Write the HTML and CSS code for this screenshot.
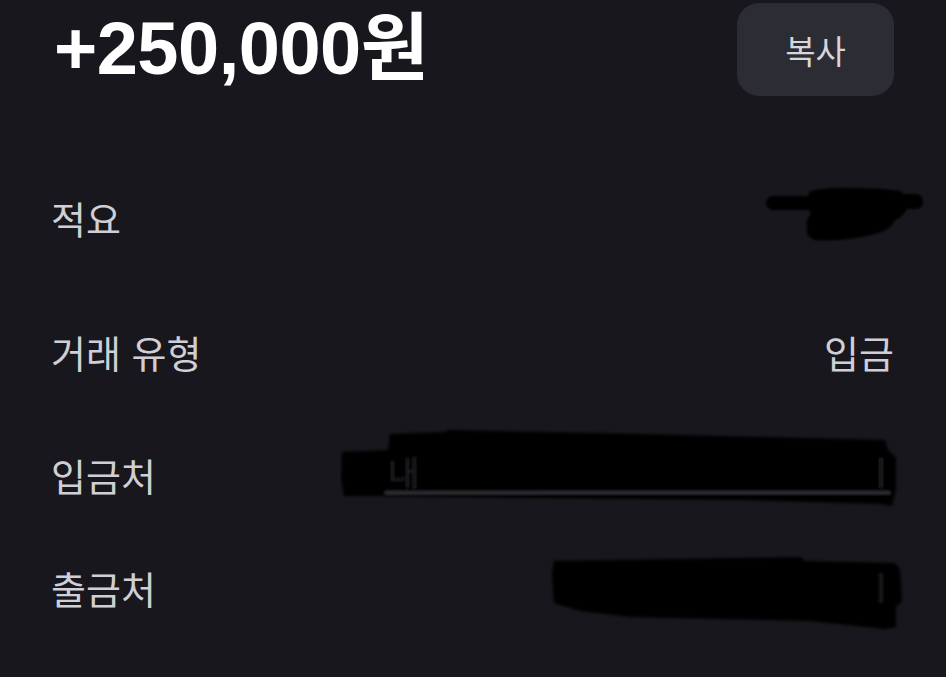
FILE: index.html
```html
<!DOCTYPE html>
<html lang="ko">
<head>
<meta charset="utf-8">
<title>거래 상세</title>
<link rel="stylesheet" href="styles.css">
</head>
<body>
<main class="screen">
  <header class="header">
    <h1 class="amount">+250,000원</h1>
    <button class="copy-btn" type="button">복사</button>
  </header>

  <section class="rows">
    <div class="row row-memo">
      <span class="label">적요</span>
      <svg class="redact redact-memo" width="163" height="58" viewBox="0 0 163 58" aria-hidden="true">
        <defs><filter id="soft1"><feGaussianBlur stdDeviation="1.2"/></filter></defs>
        <g fill="#040406" filter="url(#soft1)">
          <rect x="3" y="10" width="80" height="14" rx="7"/>
          <path d="M46 6 Q60 1 90 2 Q120 2 138 5 L145 20 Q142 30 132 34 Q128 44 112 48 Q80 56 52 54 Q42 50 44 42 Q42 34 48 28 Q42 18 46 6 Z"/>
          <rect x="128" y="8" width="32" height="15" rx="7"/>
        </g>
      </svg>
    </div>

    <div class="row row-type">
      <span class="label">거래 유형</span>
      <span class="value">입금</span>
    </div>

    <div class="row row-in">
      <span class="label">입금처</span>
      <svg class="redact redact-in" width="562" height="82" viewBox="0 0 562 82" aria-hidden="true">
        <defs><filter id="soft2"><feGaussianBlur stdDeviation="1.5"/></filter></defs>
        <g filter="url(#soft2)">
          <path fill="#040406" d="M2 24 L48 22 L50 6 L105 4 L108 2 L300 6 L545 12 L548 22 L556 30 L556 62 L552 78 L540 76 L400 72 L200 70 L48 68 L4 68 L1 50 Z"/>
          <rect x="45" y="64" width="505" height="1.5" fill="#4a4a50"/>
          <text x="48" y="58" fill="#1c1c22" font-size="34" font-family="Noto Sans CJK KR, sans-serif">내</text>
          <rect x="540" y="30" width="2" height="30" fill="#26262c"/>
        </g>
      </svg>
    </div>

    <div class="row row-out">
      <span class="label">출금처</span>
      <svg class="redact redact-out" width="356" height="78" viewBox="0 0 356 78" aria-hidden="true">
        <defs><filter id="soft3"><feGaussianBlur stdDeviation="1.5"/></filter></defs>
        <g filter="url(#soft3)">
          <path fill="#040406" d="M4 6 L250 2 L255 6 L345 8 L350 14 L352 46 L346 52 L346 72 L335 74 L260 66 L80 62 L30 56 L4 48 L2 20 Z"/>
          <rect x="330" y="18" width="2" height="30" fill="#222228"/>
        </g>
      </svg>
    </div>
  </section>
</main>
</body>
</html>
```

FILE: styles.css
```css
* {
  box-sizing: border-box;
}

html,
body {
  margin: 0;
  padding: 0;
  background: #17171d;
}

body {
  width: 946px;
  height: 677px;
  overflow: hidden;
  font-family: "Noto Sans CJK KR", "Noto Sans", sans-serif;
  color: #d0d0d6;
}

.screen {
  padding: 0 52px 0 54px;
}

.header {
  display: flex;
  justify-content: space-between;
  align-items: center;
  height: 97px;
  padding-top: 2px;
}

.amount {
  margin: 0;
  font-family: "Liberation Sans", "Noto Sans CJK KR", sans-serif;
  font-weight: 700;
  font-size: 74px;
  letter-spacing: -0.5px;
  line-height: 1;
  color: #ffffff;
  margin-top: -2px;
}

.copy-btn {
  width: 157px;
  height: 93px;
  border: none;
  border-radius: 22px;
  background: #2c2c35;
  color: #d6d6dc;
  font-family: "Noto Sans CJK KR", sans-serif;
  font-size: 33px;
  font-weight: 400;
  padding: 0;
}

.rows {
  display: flex;
  flex-direction: column;
  margin-left: -3px;
}

.row {
  display: flex;
  justify-content: space-between;
  align-items: center;
  height: 60px;
}

.label,
.value {
  font-size: 38px;
  line-height: 60px;
  color: #cfcfd5;
}

.row-memo {
  margin-top: 91px;
}

.row-type {
  margin-top: 74px;
}

.row-in {
  margin-top: 63px;
}

.row-out {
  margin-top: 53px;
}

.redact {
  display: block;
  flex: none;
}

.redact-memo {
  margin-right: -32px;
  margin-top: -6px;
}

.redact-in {
  margin-right: -8px;
  margin-top: -12px;
}

.redact-out {
  margin-right: -12px;
  margin-top: 12px;
}
```
